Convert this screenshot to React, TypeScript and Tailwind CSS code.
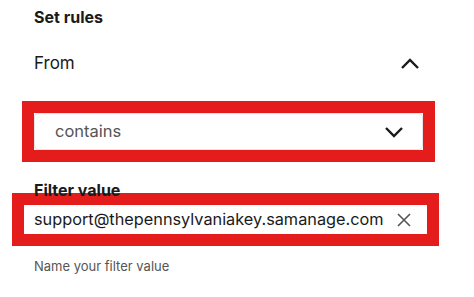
import React from "react";

export default function App() {
  return (
    <div
      className="w-[474px] h-[297px] bg-white text-[#1a1a1a] overflow-hidden"
      style={{ fontFamily: "Inter, 'Noto Sans', sans-serif" }}
    >
      <div className="pl-[34px] pt-[5px] text-[16px] leading-[24px] font-bold">Set rules</div>
      <div className="flex items-center justify-between pl-[34px] pr-[54px] mt-[23px] h-[24px]">
        <span className="text-[17px]">From</span>
        <svg width="20" height="12" viewBox="0 0 20 12" fill="none">
          <path d="M2 10 L10 2 L18 10" stroke="#1a1a1a" strokeWidth="2.4" />
        </svg>
      </div>
      <div className="ml-[22px] mt-[25px] w-[413px] h-[61px] border-[12px] border-[#e41c1c]">
        <div className="h-full bg-white rounded-[4px] border border-[#e5e5e5] flex items-center justify-between pl-[20px] pr-[18px]">
          <span className="text-[16.5px] text-[#555]">contains</span>
          <svg width="20" height="12" viewBox="0 0 20 12" fill="none">
            <path d="M2 2 L10 10 L18 2" stroke="#1a1a1a" strokeWidth="2.4" />
          </svg>
        </div>
      </div>
      <div className="pl-[34px] mt-[18px] text-[16px] leading-[20px] font-bold">Filter value</div>
      <div className="ml-[12px] mt-[-7px] w-[427px] h-[53px] border-[12px] border-[#e41c1c]">
        <div className="h-full bg-white flex items-center justify-between pl-[10px] pr-[16px]">
          <span className="text-[16.3px] text-[#1a1a1a]">support@thepennsylvaniakey.samanage.com</span>
          <svg width="14" height="14" viewBox="0 0 14 14" fill="none">
            <path d="M1 1 L13 13 M13 1 L1 13" stroke="#555" strokeWidth="1.6" />
          </svg>
        </div>
      </div>
      <div className="pl-[34px] mt-[11px] text-[13px] leading-[18px] text-[#555]">Name your filter value</div>
    </div>
  );
}
